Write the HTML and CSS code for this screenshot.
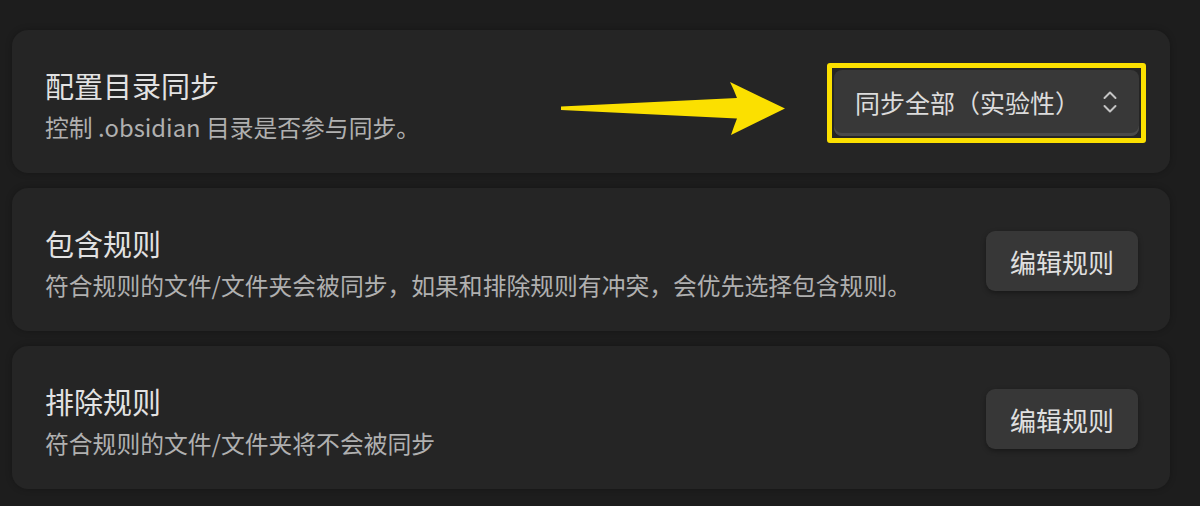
FILE: index.html
```html
<!DOCTYPE html>
<html lang="zh-CN">
<head>
    <meta charset="UTF-8">
    <meta name="viewport" content="width=device-width, initial-scale=1.0">
    <title>同步设置</title>
    <link rel="stylesheet" href="styles.css">
</head>
<body>
    <div class="settings-list">
        <div class="setting-item">
            <div class="setting-info">
                <div class="setting-name">配置目录同步</div>
                <div class="setting-desc">控制 .obsidian 目录是否参与同步。</div>
            </div>
            <div class="setting-control">
                <svg class="pointer-arrow" width="224" height="56" viewBox="0 0 224 56">
                    <path d="M0 26.5 L176 18 Q173 10 169 2 L224 28.5 L170 55 Q173 46 176 38.5 L0 30 Z" fill="#fbe000"/>
                </svg>
                <div class="highlight">
                    <div class="dropdown">
                        <span>同步全部（实验性）</span>
                        <svg class="dropdown-icon" width="18" height="26" viewBox="0 0 18 26">
                            <path d="M3.5 9 L9 3.5 L14.5 9" />
                            <path d="M3.5 17 L9 22.5 L14.5 17" />
                        </svg>
                    </div>
                </div>
            </div>
        </div>

        <div class="setting-item">
            <div class="setting-info">
                <div class="setting-name">包含规则</div>
                <div class="setting-desc">符合规则的文件/文件夹会被同步，如果和排除规则有冲突，会优先选择包含规则。</div>
            </div>
            <div class="setting-control">
                <button class="edit-btn">编辑规则</button>
            </div>
        </div>

        <div class="setting-item">
            <div class="setting-info">
                <div class="setting-name">排除规则</div>
                <div class="setting-desc">符合规则的文件/文件夹将不会被同步</div>
            </div>
            <div class="setting-control">
                <button class="edit-btn">编辑规则</button>
            </div>
        </div>
    </div>
</body>
</html>
```

FILE: styles.css
```css
* {
    margin: 0;
    padding: 0;
    box-sizing: border-box;
}

body {
    font-family: "Noto Sans CJK SC", "Noto Sans", sans-serif;
    background: #1d1d1d;
    color: #dcdcdc;
    padding: 30px 30px 17px 12px;
}

.settings-list {
    display: flex;
    flex-direction: column;
    gap: 15px;
    width: 1158px;
}

.setting-item {
    height: 143px;
    background: #252525;
    border-radius: 16px;
    box-shadow: 0 0 6px rgba(0,0,0,0.25);
    display: flex;
    align-items: center;
    justify-content: space-between;
    padding: 0 32px 0 33px;
}

.setting-info {
    padding-top: 6px;
}

.setting-name {
    font-size: 29px;
    font-weight: 400;
    line-height: 40px;
    color: #e2e2e2;
}

.setting-desc {
    font-size: 23.8px;
    line-height: 34px;
    margin-top: 5px;
    color: #b0b0b0;
}

.setting-control {
    display: flex;
    align-items: center;
    gap: 42px;
    margin-top: 3px;
}

.pointer-arrow {
    margin-top: 10px;
}

/* yellow frame drawn around the select */
.highlight {
    border: 5px solid #fbe000;
    border-radius: 3px;
    padding: 2px;
    margin-right: -8px;
}

.dropdown {
    width: 305px;
    height: 66px;
    background: #383838;
    border-radius: 8px;
    box-shadow: inset 0 -3px 0 #4a4a4a;
    display: flex;
    align-items: center;
    justify-content: space-between;
    padding: 0 20px 3px 21px;
    font-size: 25px;
    color: #dcdcdc;
}

.dropdown-icon path {
    fill: none;
    stroke: #c4c4c4;
    stroke-width: 2;
    stroke-linecap: round;
    stroke-linejoin: round;
}

.edit-btn {
    width: 152px;
    height: 60px;
    background: #373737;
    border: none;
    border-radius: 9px;
    box-shadow: 0 2px 5px rgba(0,0,0,0.35);
    font-family: inherit;
    font-size: 26px;
    font-weight: 400;
    color: #e0e0e0;
    cursor: pointer;
}

.edit-btn:hover {
    background: #3f3f3f;
}
```
